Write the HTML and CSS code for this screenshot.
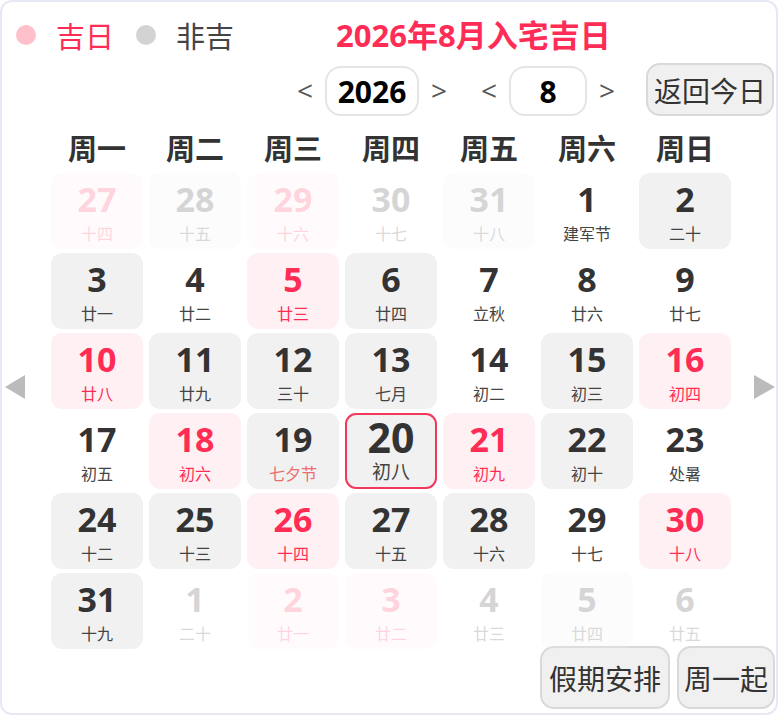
FILE: index.html
```html
<!DOCTYPE html>
<html lang="zh">
<head>
<meta charset="utf-8">
<title>2026年8月入宅吉日</title>
<link rel="stylesheet" href="styles.css">
</head>
<body>
<div class="cal">
  <div class="top">
    <span class="dot dot-good"></span><span class="lbl lbl-good">吉日</span>
    <span class="dot dot-bad"></span><span class="lbl lbl-bad">非吉</span>
    <h1 class="title">2026年8月入宅吉日</h1>
  </div>
  <div class="nav">
    <span class="ar">&lt;</span><span class="box box-y">2026</span><span class="ar">&gt;</span>
    <span class="ar ar-gap">&lt;</span><span class="box box-m">8</span><span class="ar">&gt;</span>
    <button class="btn btn-today">返回今日</button>
  </div>
  <div class="mid">
    <span class="tri tri-l"></span>
    <div class="month">
      <div class="week">
        <span>周一</span><span>周二</span><span>周三</span><span>周四</span><span>周五</span><span>周六</span><span>周日</span>
      </div>
      <div class="grid">
        <div class="cell pink other"><span class="num">27</span><span class="lun">十四</span></div>
        <div class="cell gray other"><span class="num">28</span><span class="lun">十五</span></div>
        <div class="cell pink other"><span class="num">29</span><span class="lun">十六</span></div>
        <div class="cell other"><span class="num">30</span><span class="lun">十七</span></div>
        <div class="cell gray other"><span class="num">31</span><span class="lun">十八</span></div>
        <div class="cell"><span class="num">1</span><span class="lun">建军节</span></div>
        <div class="cell gray"><span class="num">2</span><span class="lun">二十</span></div>

        <div class="cell gray"><span class="num">3</span><span class="lun">廿一</span></div>
        <div class="cell"><span class="num">4</span><span class="lun">廿二</span></div>
        <div class="cell pink"><span class="num">5</span><span class="lun">廿三</span></div>
        <div class="cell gray"><span class="num">6</span><span class="lun">廿四</span></div>
        <div class="cell"><span class="num">7</span><span class="lun">立秋</span></div>
        <div class="cell"><span class="num">8</span><span class="lun">廿六</span></div>
        <div class="cell"><span class="num">9</span><span class="lun">廿七</span></div>

        <div class="cell pink"><span class="num">10</span><span class="lun">廿八</span></div>
        <div class="cell gray"><span class="num">11</span><span class="lun">廿九</span></div>
        <div class="cell gray"><span class="num">12</span><span class="lun">三十</span></div>
        <div class="cell gray"><span class="num">13</span><span class="lun">七月</span></div>
        <div class="cell"><span class="num">14</span><span class="lun">初二</span></div>
        <div class="cell gray"><span class="num">15</span><span class="lun">初三</span></div>
        <div class="cell pink"><span class="num">16</span><span class="lun">初四</span></div>

        <div class="cell"><span class="num">17</span><span class="lun">初五</span></div>
        <div class="cell pink"><span class="num">18</span><span class="lun">初六</span></div>
        <div class="cell gray"><span class="num">19</span><span class="lun lun-fest">七夕节</span></div>
        <div class="cell gray today"><span class="num">20</span><span class="lun">初八</span></div>
        <div class="cell pink"><span class="num">21</span><span class="lun">初九</span></div>
        <div class="cell gray"><span class="num">22</span><span class="lun">初十</span></div>
        <div class="cell"><span class="num">23</span><span class="lun">处暑</span></div>

        <div class="cell gray"><span class="num">24</span><span class="lun">十二</span></div>
        <div class="cell gray"><span class="num">25</span><span class="lun">十三</span></div>
        <div class="cell pink"><span class="num">26</span><span class="lun">十四</span></div>
        <div class="cell gray"><span class="num">27</span><span class="lun">十五</span></div>
        <div class="cell gray"><span class="num">28</span><span class="lun">十六</span></div>
        <div class="cell"><span class="num">29</span><span class="lun">十七</span></div>
        <div class="cell pink"><span class="num">30</span><span class="lun">十八</span></div>

        <div class="cell gray"><span class="num">31</span><span class="lun">十九</span></div>
        <div class="cell other"><span class="num">1</span><span class="lun">二十</span></div>
        <div class="cell pink other"><span class="num">2</span><span class="lun">廿一</span></div>
        <div class="cell pink other"><span class="num">3</span><span class="lun">廿二</span></div>
        <div class="cell other"><span class="num">4</span><span class="lun">廿三</span></div>
        <div class="cell gray other"><span class="num">5</span><span class="lun">廿四</span></div>
        <div class="cell other"><span class="num">6</span><span class="lun">廿五</span></div>
      </div>
    </div>
    <span class="tri tri-r"></span>
  </div>
  <div class="foot">
    <button class="btn btn-hol">假期安排</button>
    <button class="btn btn-week">周一起</button>
  </div>
</div>
</body>
</html>
```

FILE: styles.css
```css
* { box-sizing: border-box; }
html, body { margin: 0; padding: 0; background: #ffffff; }
body {
  font-family: "Noto Sans CJK SC", "Noto Sans", sans-serif;
  color: #333333;
}
.cal {
  width: 778px;
  height: 715px;
  border: 2px solid #e6e9f3;
  border-radius: 12px;
  background: #ffffff;
  overflow: hidden;
}
.top {
  display: flex;
  align-items: center;
  height: 56px;
  margin-top: 5px;
  padding-left: 14px;
}
.dot {
  width: 20px;
  height: 20px;
  border-radius: 50%;
  margin-right: 20px;
}
.dot-good { background: #ffc0cb; }
.dot-bad { background: #d3d3d3; }
.lbl {
  font-size: 29px;
  line-height: 1;
  margin-right: 22px;
}
.lbl-good { color: #ff2d55; }
.lbl-bad { color: #444444; }
.title {
  margin: 0 0 0 80px;
  font-family: "Open Sans", "Noto Sans CJK SC", sans-serif;
  font-size: 31px;
  font-weight: 700;
  line-height: 1;
  color: #ff2d55;
}
.nav {
  display: flex;
  align-items: flex-end;
  justify-content: flex-end;
  height: 53px;
  padding-right: 2px;
}
.ar {
  width: 40px;
  height: 50px;
  display: flex;
  align-items: center;
  justify-content: center;
  font-family: "Open Sans", sans-serif;
  font-size: 28px;
  color: #555555;
  padding-bottom: 2px;
}
.ar-gap { margin-left: 10px; }
.box {
  height: 50px;
  border: 2px solid #e4e4e4;
  border-radius: 16px;
  display: flex;
  align-items: center;
  justify-content: center;
  font-family: "Open Sans", sans-serif;
  font-size: 30px;
  font-weight: 700;
  color: #000000;
}
.box-y { width: 94px; }
.box-m { width: 78px; }
.btn {
  background: #f0f0f0;
  border: 2px solid #d9d9d9;
  border-radius: 14px;
  font-family: "Noto Sans CJK SC", sans-serif;
  font-size: 28px;
  color: #333333;
  padding: 0;
  display: flex;
  align-items: center;
  justify-content: center;
}
.btn-today {
  width: 128px;
  height: 53px;
  margin-left: 19px;
}
.mid {
  display: flex;
  align-items: center;
  margin-top: 8px;
  padding-left: 3px;
}
.tri {
  width: 0;
  height: 0;
  border-top: 12px solid transparent;
  border-bottom: 12px solid transparent;
}
.tri-l {
  border-right: 20px solid #bbbbbb;
  margin-right: 26px;
}
.tri-r {
  border-left: 21px solid #bbbbbb;
  margin-left: 23px;
}
.week {
  display: grid;
  grid-template-columns: repeat(7, 92px);
  column-gap: 6px;
  height: 46px;
  margin-bottom: 3px;
  align-items: center;
  justify-items: center;
  font-size: 29px;
  font-weight: 700;
  color: #333333;
}
.grid {
  display: grid;
  grid-template-columns: repeat(7, 92px);
  grid-auto-rows: 76px;
  gap: 4px 6px;
}
.cell {
  border-radius: 11px;
  display: flex;
  flex-direction: column;
  align-items: center;
  padding-top: 9px;
}
.cell.gray { background: #f1f1f1; }
.cell.pink { background: #fff0f3; }
.num {
  font-family: "Open Sans", "Noto Sans", sans-serif;
  font-size: 34px;
  font-weight: 700;
  line-height: 34px;
  color: #333333;
}
.lun {
  margin-top: 9px;
  font-size: 16px;
  line-height: 16px;
  color: #444444;
}
.cell.pink .num, .cell.pink .lun { color: #ff2d55; }
.lun-fest { color: #ea6e6e; }
.cell.other { opacity: 0.2; }
.cell.today {
  border: 2px solid #f2385c;
  padding-top: 2px;
}
.cell.today .num {
  font-size: 41px;
  line-height: 40px;
}
.cell.today .lun {
  margin-top: 4px;
  font-size: 19px;
  line-height: 19px;
}
.foot {
  display: flex;
  justify-content: flex-end;
  gap: 7px;
  margin-top: -3px;
  padding-right: 1px;
}
.btn-hol { width: 130px; height: 63px; }
.btn-week { width: 98px; height: 63px; }
```
